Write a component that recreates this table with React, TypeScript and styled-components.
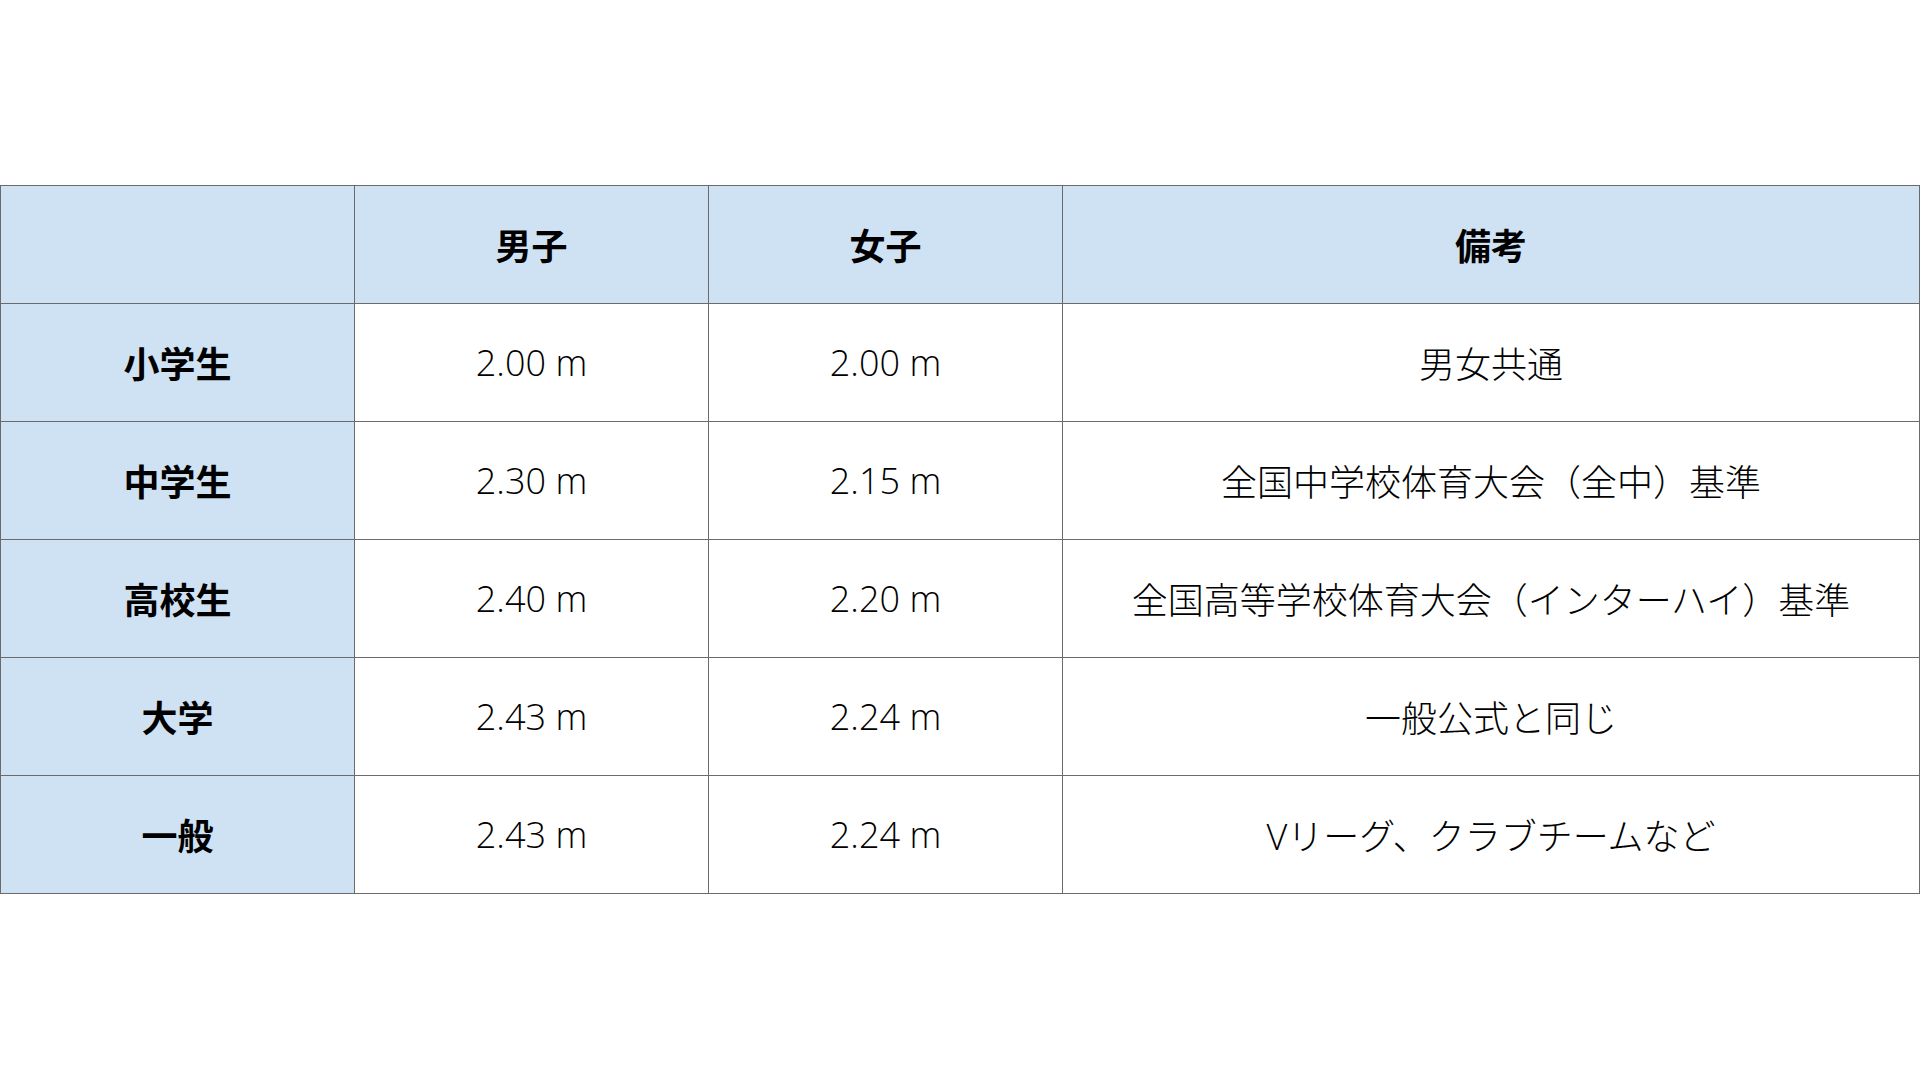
import styled, { createGlobalStyle } from 'styled-components';

const GlobalStyle = createGlobalStyle`
  html, body {
    margin: 0;
    padding: 0;
    background: #ffffff;
  }
  body {
    font-family: 'Open Sans', 'Noto Sans CJK JP', sans-serif;
    color: #000000;
  }
`;

const Page = styled.div`
  width: 1920px;
  height: 1080px;
  padding-top: 185px;
  box-sizing: border-box;
`;

const Table = styled.table`
  width: 1920px;
  border-collapse: collapse;
  table-layout: fixed;
`;

const Cell = styled.td<{ $head?: boolean; $bold?: boolean }>`
  height: 117px;
  padding: 0;
  border: 1px solid #6b6b6b;
  text-align: center;
  vertical-align: middle;
  font-size: 36px;
  font-weight: ${(p) => (p.$bold ? 700 : 300)};
  background: ${(p) => (p.$head ? '#cfe2f3' : '#ffffff')};
  white-space: nowrap;
`;

const rows = [
  { level: '小学生', boys: '2.00 m', girls: '2.00 m', note: '男女共通' },
  { level: '中学生', boys: '2.30 m', girls: '2.15 m', note: '全国中学校体育大会（全中）基準' },
  { level: '高校生', boys: '2.40 m', girls: '2.20 m', note: '全国高等学校体育大会（インターハイ）基準' },
  { level: '大学', boys: '2.43 m', girls: '2.24 m', note: '一般公式と同じ' },
  { level: '一般', boys: '2.43 m', girls: '2.24 m', note: 'Vリーグ、クラブチームなど' },
];

export default function App() {
  return (
    <Page>
      <GlobalStyle />
      <Table>
        <colgroup>
          <col style={{ width: 354 }} />
          <col style={{ width: 354 }} />
          <col style={{ width: 354 }} />
          <col />
        </colgroup>
        <thead>
          <tr>
            <Cell as="th" $head $bold></Cell>
            <Cell as="th" $head $bold>男子</Cell>
            <Cell as="th" $head $bold>女子</Cell>
            <Cell as="th" $head $bold>備考</Cell>
          </tr>
        </thead>
        <tbody>
          {rows.map((r) => (
            <tr key={r.level}>
              <Cell $head $bold>{r.level}</Cell>
              <Cell>{r.boys}</Cell>
              <Cell>{r.girls}</Cell>
              <Cell>{r.note}</Cell>
            </tr>
          ))}
        </tbody>
      </Table>
    </Page>
  );
}
